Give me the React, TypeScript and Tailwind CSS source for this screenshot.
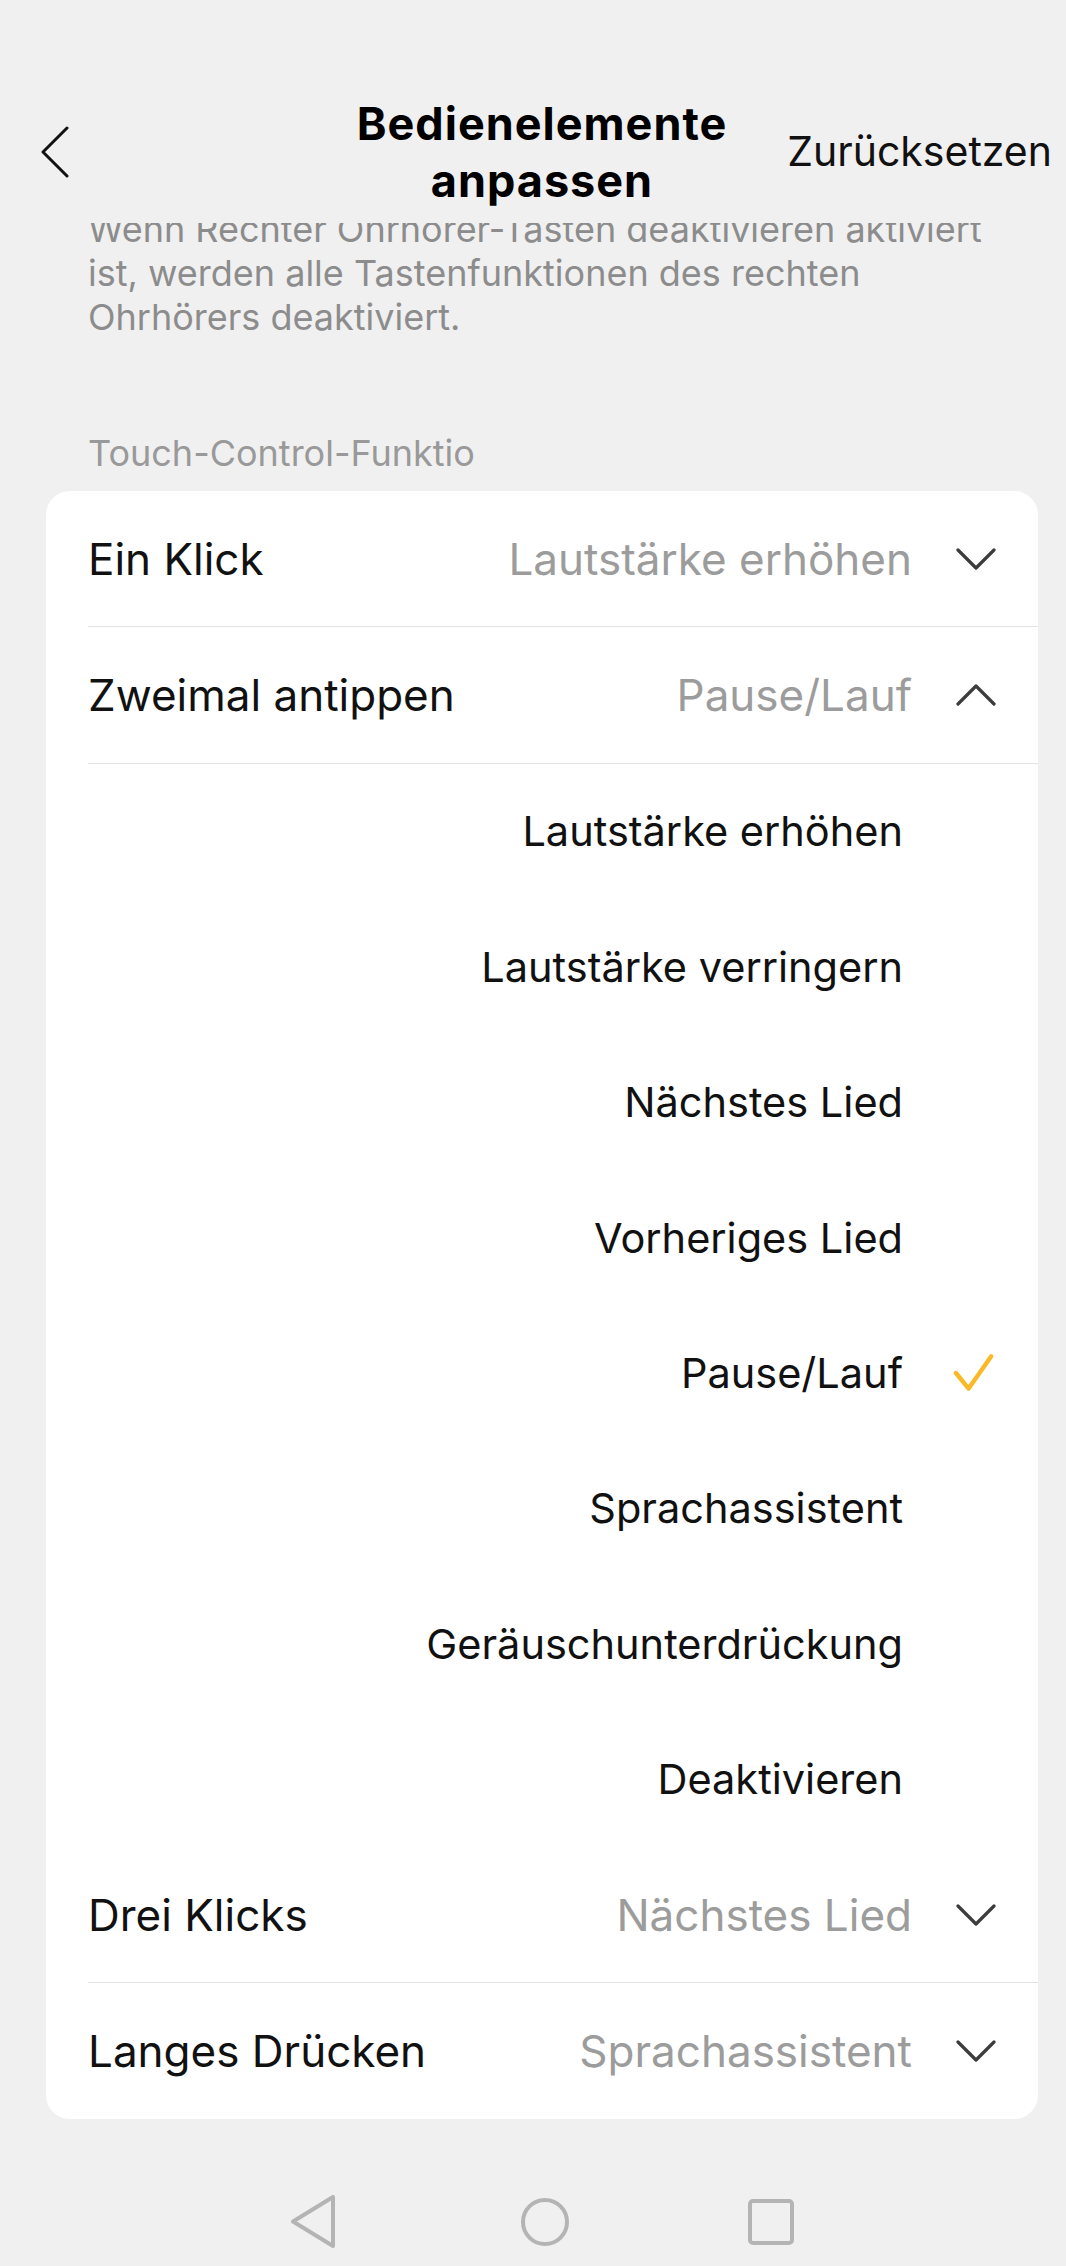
import React from "react";

const font = { fontFamily: "Inter, 'Noto Sans', sans-serif" };

function Chevron({ up = false }: { up?: boolean }) {
  return (
    <svg width="40" height="22" viewBox="0 0 40 22" className="shrink-0">
      <polyline
        points={up ? "2,20 20,2 38,20" : "2,2 20,20 38,2"}
        fill="none"
        stroke="#3c3c3c"
        strokeWidth="3.2"
        strokeLinecap="round"
        strokeLinejoin="round"
      />
    </svg>
  );
}

function Row({ label, value, up = false }: { label: string; value: string; up?: boolean }) {
  return (
    <div className="flex h-[135.4px] items-center pl-[42px] pr-[42px]">
      <span className="flex-1 text-[44px] text-[#111] whitespace-nowrap">{label}</span>
      <span className="text-[44px] text-[#9c9c9c] whitespace-nowrap">{value}</span>
      <div className="ml-[44px] flex w-[40px] items-center justify-center">
        <Chevron up={up} />
      </div>
    </div>
  );
}

function Divider() {
  return <div className="ml-[42px] h-px bg-[#e3e3e3]" />;
}

const options = [
  "Lautstärke erhöhen",
  "Lautstärke verringern",
  "Nächstes Lied",
  "Vorheriges Lied",
  "Pause/Lauf",
  "Sprachassistent",
  "Geräuschunterdrückung",
  "Deaktivieren",
];

export default function App() {
  return (
    <div className="h-[2266px] w-[1066px] overflow-hidden bg-[#f0f0f0]" style={font}>
      <div className="flex h-[2266px] w-[1084px] flex-col">
        {/* Header */}
        <div className="relative z-10 h-[223px] shrink-0 bg-[#f0f0f0] pt-[95px]">
          <div className="grid h-[114px] grid-cols-[1fr_auto_1fr] items-center">
            <div className="pl-[40px]">
              <svg width="30" height="52" viewBox="0 0 30 52">
                <polyline
                  points="27,2 3,26 27,50"
                  fill="none"
                  stroke="#111"
                  strokeWidth="3"
                  strokeLinecap="round"
                  strokeLinejoin="round"
                />
              </svg>
            </div>
            <div className="text-center text-[45px] font-bold leading-[57px] tracking-[1px] text-black">
              Bedienelemente
              <br />
              anpassen
            </div>
            <div className="justify-self-end pr-[32px] text-[41px] text-[#111] whitespace-nowrap">Zurücksetzen</div>
          </div>
        </div>

        {/* Content */}
        <div className="flex flex-1 flex-col overflow-hidden">
          <div className="mt-[-16px] pl-[88px] text-[36px] leading-[44px] text-[#8c8c8c] whitespace-nowrap">
            Wenn Rechter Ohrhörer-Tasten deaktivieren aktiviert
            <br />
            ist, werden alle Tastenfunktionen des rechten
            <br />
            Ohrhörers deaktiviert.
          </div>

          <div className="mt-[94px] pl-[88px] text-[36px] leading-[40px] text-[#999]">Touch-Control-Funktio</div>

          <div className="mx-[46px] mt-[18px] rounded-[24px] bg-white">
            <Row label="Ein Klick" value="Lautstärke erhöhen" />
            <Divider />
            <Row label="Zweimal antippen" value="Pause/Lauf" up />
            <Divider />
            {options.map((o) => (
              <div key={o} className="flex h-[135.4px] items-center justify-end gap-[50px] pr-[44px]">
                <span className="text-[41.5px] text-[#111] whitespace-nowrap">{o}</span>
                <div className="flex w-[41px] items-center justify-center">
                  {o === "Pause/Lauf" && (
                    <svg width="42" height="40" viewBox="0 0 42 40">
                      <polyline
                        points="3,20 16,36 39,3"
                        fill="none"
                        stroke="#fbb928"
                        strokeWidth="4.5"
                        strokeLinecap="round"
                        strokeLinejoin="round"
                      />
                    </svg>
                  )}
                </div>
              </div>
            ))}
            <Row label="Drei Klicks" value="Nächstes Lied" />
            <Divider />
            <Row label="Langes Drücken" value="Sprachassistent" />
          </div>

          {/* Nav bar */}
          <div className="mt-[59px] flex h-[90px] items-center justify-center">
            <svg width="45" height="53" viewBox="0 0 45 53">
              <polygon
                points="42,2 42,51 2,26.5"
                fill="none"
                stroke="#b4b4b4"
                strokeWidth="4"
                strokeLinejoin="round"
              />
            </svg>
            <svg width="50" height="50" viewBox="0 0 50 50" className="ml-[184px]">
              <circle cx="25" cy="25" r="22" fill="none" stroke="#b4b4b4" strokeWidth="4" />
            </svg>
            <svg width="46" height="46" viewBox="0 0 46 46" className="ml-[178px]">
              <rect x="2" y="2" width="42" height="42" rx="3" fill="none" stroke="#b4b4b4" strokeWidth="4" />
            </svg>
          </div>
        </div>
      </div>
    </div>
  );
}
